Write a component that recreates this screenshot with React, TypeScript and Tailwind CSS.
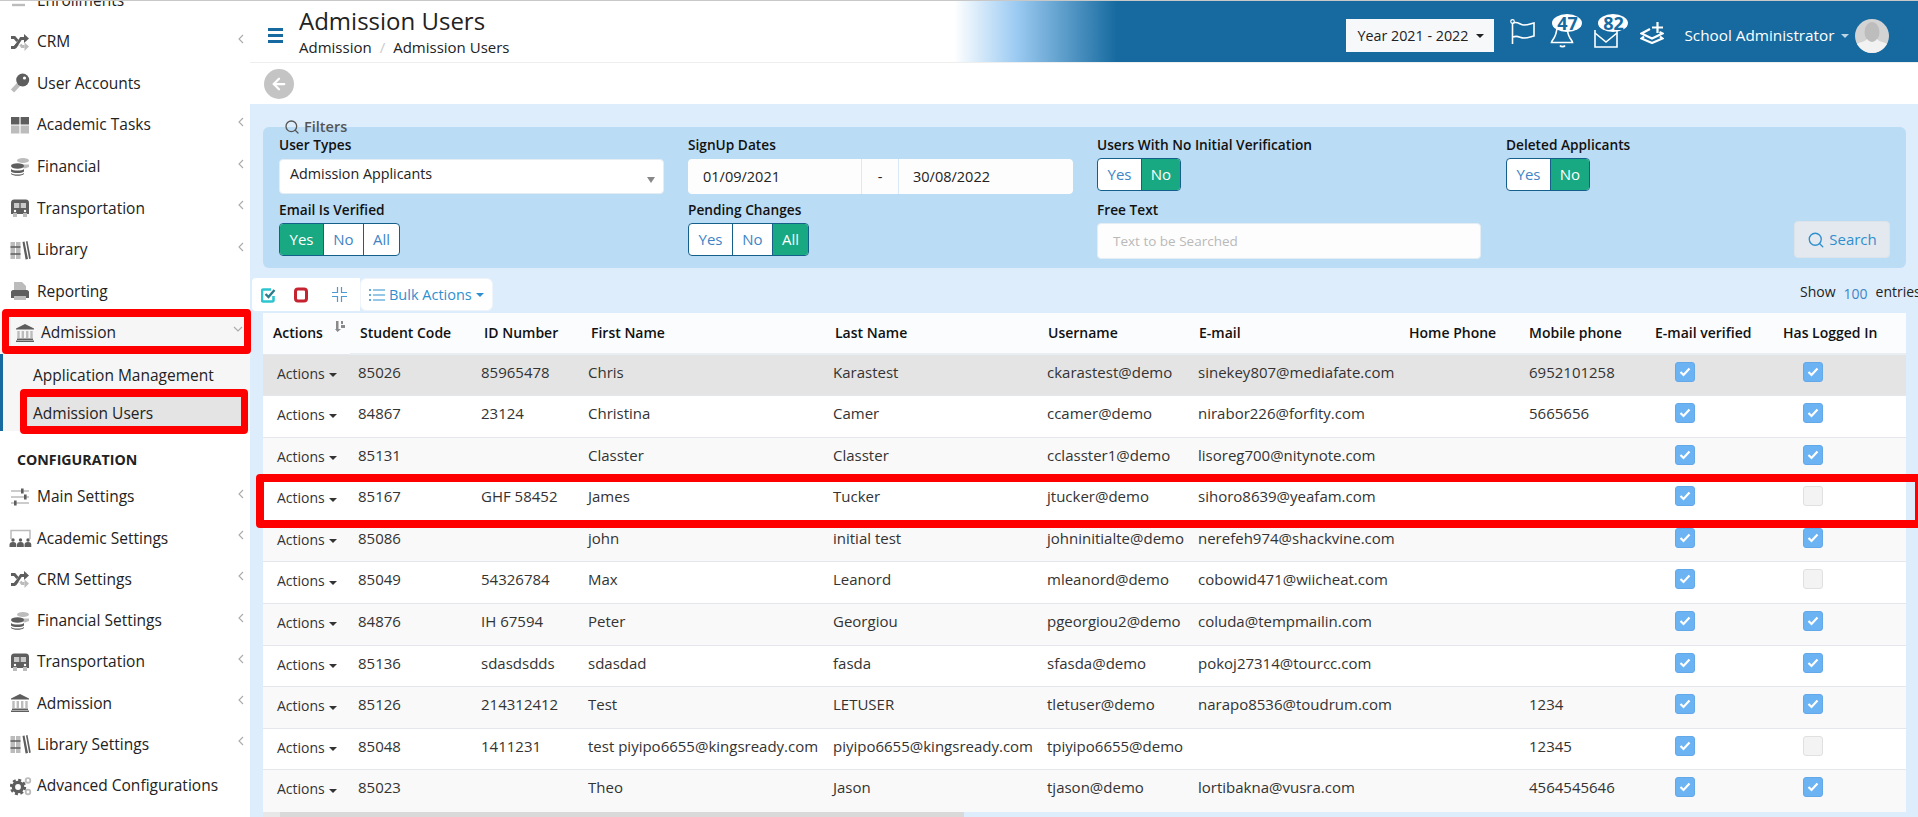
import React from "react";
import { Search, ArrowLeft } from "lucide-react";

const D = "#5e5e5e";
const L = "#bcbcbc";

function Svg({ children, w = 20 }: { children: React.ReactNode; w?: number }) {
  return (
    <svg width={w} height={20} viewBox={`0 0 ${w} 20`} fill="none" className="shrink-0">
      {children}
    </svg>
  );
}

const icons: Record<string, React.ReactNode> = {
  exchange: (
    <Svg>
      <path d="M18 6H5M8 2L3 6l5 4" stroke={L} strokeWidth="2.4" />
      <path d="M2 15h13" stroke={L} strokeWidth="2.4" />
    </Svg>
  ),
  shuffle: (
    <Svg>
      <path d="M1 15.5h3.5L7.5 12" stroke={D} strokeWidth="2.8" />
      <path d="M1 5.5h3.5l3 3.5" stroke={D} strokeWidth="2.8" />
      <path d="M5 15.5 L11 6.5h3" stroke={D} strokeWidth="2.8" />
      <path d="M14 2l5 4.5L14 11z" fill={D} />
      <path d="M10.5 12.5l1.5 2h2.5" stroke={L} strokeWidth="2.8" />
      <path d="M14.5 10.5l4.5 4-4.5 4.5z" fill={L} />
    </Svg>
  ),
  key: (
    <Svg>
      <path d="M9 11L2.5 18" stroke={L} strokeWidth="4.4" />
      <circle cx="12.7" cy="7" r="6.5" fill={D} />
      <circle cx="14.5" cy="5" r="1.6" fill="#fff" />
    </Svg>
  ),
  tasks: (
    <Svg>
      <rect x="1" y="2" width="8.4" height="7.5" fill={D} />
      <rect x="10.6" y="2" width="8.4" height="7.5" fill={D} />
      <rect x="1" y="10.5" width="8.4" height="8" fill={L} />
      <rect x="10.6" y="10.5" width="8.4" height="8" fill={L} />
    </Svg>
  ),
  coins: (
    <Svg>
      <ellipse cx="13" cy="3.5" rx="6" ry="2.5" fill={L} />
      <path d="M8 7.5h11v2.5l-4 1.5L8 9z" fill={L} />
      <ellipse cx="7.5" cy="9" rx="6.5" ry="2.7" fill={D} />
      <path d="M1 12c2 2 11 2 13 0v2.5c-2 2-11 2-13 0z" fill={D} />
      <path d="M1 16c2 2 11 2 13 0v1c-2 2.4-11 2.4-13 0z" fill={D} />
    </Svg>
  ),
  bus: (
    <Svg>
      <path d="M4 1.500h12c1.500 0 3 1 3 3V16H1V4.500c0-2 1.500-3 3-3z" fill={D} />
      <rect x="4" y="5" width="5.300" height="5" fill="#c9c9c9" />
      <rect x="10.700" y="5" width="5.300" height="5" fill="#c9c9c9" />
      <rect x="3" y="15" width="4" height="4" fill={L} />
      <rect x="13" y="15" width="4" height="4" fill={L} />
      <circle cx="5" cy="13" r="1.200" fill="#fff" />
      <circle cx="15" cy="13" r="1.200" fill="#fff" />
    </Svg>
  ),
  library: (
    <Svg w={21}>
      <rect x="0.500" y="2" width="4.500" height="17" fill={L} />
      <rect x="6" y="2" width="4.500" height="17" fill={L} />
      <path d="M0.500 7h10M0.500 14h10" stroke={D} strokeWidth="1.400" />
      <path d="M12.500 2l2-.5 3.500 17.500-2.400.5z" fill={D} />
      <path d="M16 1.500l1.500-.4 3.300 17.400-1.700.4z" fill={D} />
    </Svg>
  ),
  printer: (
    <Svg>
      <path d="M4 1h8l4 4v5H4z" fill={L} />
      <path d="M1 11c0-1 1-2 2-2h14c1 0 2 1 2 2v6H1z" fill={D} />
      <rect x="4" y="15" width="12" height="4" fill={L} />
    </Svg>
  ),
  bank: (
    <Svg>
      <path d="M10 1l9 4.500v1H1v-1z" fill={D} />
      <path d="M3.500 8v7M7.800 8v7M12.200 8v7M16.500 8v7" stroke={L} strokeWidth="2.400" />
      <rect x="2" y="15.500" width="16" height="1.500" fill={D} />
      <rect x="1" y="17.500" width="18" height="1.500" fill={D} />
    </Svg>
  ),
  sliders: (
    <Svg>
      <path d="M1 4h18M1 10h18M1 16h18" stroke={L} strokeWidth="1.600" />
      <rect x="11" y="1.500" width="2.600" height="5" fill={D} />
      <rect x="14" y="7.500" width="2.600" height="5" fill={D} />
      <rect x="4" y="13.500" width="2.600" height="5" fill={D} />
    </Svg>
  ),
  screen: (
    <span className="-ml-[1px] flex">
      <Svg w={23}>
        <path d="M2 11V2.500h19V11" stroke={L} strokeWidth="1.500" />
        <g fill={D}>
          <circle cx="4" cy="12" r="1.700" />
          <circle cx="11.500" cy="12" r="1.700" />
          <circle cx="19" cy="12" r="1.700" />
          <path d="M0.500 19v-2c0-2 1-3 3.500-3s3.300 1 3.300 3v2z" />
          <path d="M8 19v-2c0-2 1-3 3.500-3s3.300 1 3.300 3v2z" />
          <path d="M15.500 19v-2c0-2 1-3 3.500-3s3.300 1 3.300 3v2z" />
        </g>
      </Svg>
    </span>
  ),
  cogs: (
    <Svg w={22}>
      <circle cx="8" cy="11" r="4.600" stroke={D} strokeWidth="3.400" />
      <circle cx="8" cy="11" r="7" stroke={D} strokeWidth="2.400" strokeDasharray="3 2.500" />
      <circle cx="18" cy="4.500" r="2.300" stroke={L} strokeWidth="1.800" />
      <circle cx="18" cy="16" r="2.300" stroke={L} strokeWidth="1.800" />
    </Svg>
  ),
};

function Chevron() {
  return (
    <svg width="6" height="10" viewBox="0 0 6 10" fill="none" className="-mt-[6px] shrink-0">
      <path d="M5 1L1 5l4 4" stroke="#aaa" strokeWidth="1.100" />
    </svg>
  );
}

function NavRow({ icon, label, arrow = true, compact = false }: { icon: string; label: string; arrow?: boolean; compact?: boolean }) {
  return (
    <div className={`flex items-center pl-[10px] pr-[6px] text-[15.500px] text-[#222] ${compact ? "h-[41.25px]" : "h-[41.6px]"}`}>
      <span className="flex w-[27px] shrink-0">{icons[icon]}</span>
      <span className="flex-1 whitespace-nowrap">{label}</span>
      {arrow && <Chevron />}
    </div>
  );
}

function Sidebar() {
  return (
    <aside className="h-full w-[250px] shrink-0 overflow-hidden bg-white">
      <div className="-mt-[21.500px]">
        <NavRow icon="exchange" label="Enrollments" arrow={false} />
        <NavRow icon="shuffle" label="CRM" />
        <NavRow icon="key" label="User Accounts" arrow={false} />
        <NavRow icon="tasks" label="Academic Tasks" />
        <NavRow icon="coins" label="Financial" />
        <NavRow icon="bus" label="Transportation" />
        <NavRow icon="library" label="Library" />
        <NavRow icon="printer" label="Reporting" arrow={false} />
        <div className="flex h-[41.6px] items-center bg-[#f6f6f6] pl-[15px] pr-[7px] text-[15.500px] text-[#222]">
          <span className="flex w-[26px] shrink-0">{icons.bank}</span>
          <span className="flex-1">Admission</span>
          <svg width="10" height="6" viewBox="0 0 10 6" fill="none" className="-mt-[8px]">
            <path d="M1 1l4 4 4-4" stroke="#aaa" strokeWidth="1.100" />
          </svg>
        </div>
        <div className="h-[77px] border-l-[3px] border-[#166a9f] bg-[#f6f6f6] pl-[30px] text-[15.500px] text-[#222]">
          <div className="flex h-[43px] items-center">Application Management</div>
          <div className="-ml-[6px] mr-[8px] flex h-[34px] items-center bg-[#e4e4e4] pl-[6px]">Admission Users</div>
        </div>
        <div className="flex h-[45.500px] items-center pl-[17px] pt-[13px] text-[14.200px] font-bold text-[#222]">CONFIGURATION</div>
        <NavRow compact icon="sliders" label="Main Settings" />
        <NavRow compact icon="screen" label="Academic Settings" />
        <NavRow compact icon="shuffle" label="CRM Settings" />
        <NavRow compact icon="coins" label="Financial Settings" />
        <NavRow compact icon="bus" label="Transportation" />
        <NavRow compact icon="bank" label="Admission" />
        <NavRow compact icon="library" label="Library Settings" />
        <NavRow compact icon="cogs" label="Advanced Configurations" arrow={false} />
      </div>
    </aside>
  );
}

function HeaderIcons() {
  return (
    <div className="flex items-center">
      <svg width="26" height="25" viewBox="0 0 26 25" fill="none" className="ml-[16px]">
        <circle cx="2.500" cy="2.500" r="1.800" stroke="#fff" strokeWidth="1.200" />
        <path d="M2.500 4v21" stroke="#fff" strokeWidth="1.600" />
        <path d="M3 4c5-2 7 2 11 2s6-1 10-2v13c-4 1-6 2-10 2s-6-3-11-1" stroke="#fff" strokeWidth="1.600" />
      </svg>
      <div className="relative ml-[14px] h-[32px] w-[25px]">
        <svg width="25" height="20" viewBox="0 0 25 20" fill="none" className="absolute left-0 top-[12px]">
          <path d="M7 0C6.500 4 6 7 4 10 3 11.500 2 12.500 1.500 14.500h21C22 12.500 21 11.500 20 10 18 7 17.500 4 17 0" stroke="#fff" strokeWidth="1.600" />
          <path d="M10 17.500c1 1.500 4 1.500 5 0" stroke="#fff" strokeWidth="1.800" />
        </svg>
        <span className="absolute -top-[2px] left-[2px] flex h-[18px] w-[30px] items-center justify-center rounded-[50%] bg-white text-[18px] font-bold leading-none text-[#166a9f]">47</span>
      </div>
      <div className="relative ml-[19px] h-[32px] w-[24px]">
        <svg width="24" height="20" viewBox="0 0 24 20" fill="none" className="absolute left-0 top-[12px]">
          <path d="M1 2v17h22V2" stroke="#fff" strokeWidth="1.600" />
          <path d="M1 5l11 9 11-9" stroke="#fff" strokeWidth="1.600" />
        </svg>
        <span className="absolute -top-[2px] left-[4px] flex h-[18px] w-[30px] items-center justify-center rounded-[50%] bg-white text-[18px] font-bold leading-none text-[#166a9f]">82</span>
      </div>
      <svg width="24" height="22" viewBox="0 0 24 22" fill="none" className="ml-[22px] mt-[3px]">
        <path d="M17.500 0v11M12 5.500h11" stroke="#fff" strokeWidth="2.200" />
        <path d="M10 7L1.500 11.500l10.500 5 10.500-5-3-1.500" stroke="#fff" strokeWidth="2.200" />
        <path d="M4 14.500l-2.500 2 10.500 4.500 10.500-4.500-2.500-2" stroke="#fff" strokeWidth="2.200" />
      </svg>
    </div>
  );
}

function Header() {
  return (
    <header className="flex h-[62px] shrink-0 items-center border-b border-[#eee] bg-[linear-gradient(90deg,#fff_704px,#9ccbf2_766px,#166a9f_867px)] pl-[18px]">
      <div className="mt-[8px] flex w-[15px] flex-col gap-[3px]">
        <span className="h-[3px] bg-[#166a9f]" />
        <span className="h-[3px] bg-[#166a9f]" />
        <span className="h-[3px] bg-[#166a9f]" />
      </div>
      <div className="-mt-[2px] ml-[16px] text-[#222]">
        <div className="text-[24px] leading-[32px]">Admission Users</div>
        <div className="flex h-[20px] items-center text-[15px] leading-[20px]">
          Admission<span className="mx-[8px] text-[#ccc]">/</span>Admission Users
        </div>
      </div>
      <div className="ml-auto mt-[8px] flex h-[33px] w-[148px] items-center bg-[#f7f8fa] pl-[11px] text-[14.300px] text-[#222]">
        Year 2021 - 2022
        <span className="ml-[8px] h-0 w-0 border-x-[4px] border-t-[4px] border-x-transparent border-t-[#222]" />
      </div>
      <HeaderIcons />
      <span className="ml-[20px] mt-[8px] whitespace-nowrap text-[15.300px] text-white">School Administrator</span>
      <span className="ml-[6px] mt-[8px] h-0 w-0 border-x-[4px] border-t-[4px] border-x-transparent border-t-[#bcd4e6]" />
      <svg width="34" height="34" viewBox="0 0 34 34" className="ml-[6.500px] mr-[29px] mt-[8px]">
        <defs>
          <clipPath id="av">
            <ellipse cx="17" cy="17" rx="17" ry="17" />
          </clipPath>
        </defs>
        <g clipPath="url(#av)">
          <rect width="34" height="34" fill="#d3d3d3" />
          <ellipse cx="17" cy="13" rx="7.500" ry="10" fill="#bdbdbd" />
          <path d="M0 34V26c4-3 10-3 12-6 3 4 7 4 10 0 2 3 8 3 12 6v8z" fill="#f2f2f2" />
        </g>
      </svg>
    </header>
  );
}

function Toggle({ active, options }: { active: string; options: [string, number][] }) {
  return (
    <div className="flex h-[33px] w-fit overflow-hidden rounded-[4px] border border-[#14608a] bg-white text-[15px]">
      {options.map(([o, w], i) => (
        <div
          key={o}
          style={{ width: w }}
          className={`flex items-center justify-center ${i > 0 ? "border-l border-[#14608a]" : ""} ${o === active ? "bg-[#18a882] text-white" : "text-[#3f85c6]"}`}
        >
          {o}
        </div>
      ))}
    </div>
  );
}

const yn: [string, number][] = [["Yes", 43], ["No", 39]];
const yna: [string, number][] = [["Yes", 43], ["No", 40], ["All", 36]];

function Label({ children, mb = "mb-[4px]" }: { children: React.ReactNode; mb?: string }) {
  return <div className={`h-[20px] whitespace-nowrap text-[13.700px] font-semibold leading-[20px] text-[#111] ${mb}`}>{children}</div>;
}

function Filters() {
  return (
    <section className="relative h-[141px] rounded-[6px] bg-[#bbdcf5] pl-[16px] pt-[8px]">
      <div className="absolute -top-[10px] left-[21px] flex h-[20px] items-center gap-[4px] text-[14.500px] font-semibold text-[#555]">
        <Search size={16} strokeWidth={2} />
        Filters
      </div>
      <div className="grid grid-cols-[409px_409px_409px_1fr] grid-rows-[65px_1fr]">
        <div>
          <Label>User Types</Label>
          <div className="relative flex h-[35px] w-[385px] items-center rounded-[4px] border border-[#e4edf4] bg-white pb-[6px] pl-[10px] text-[14.300px] text-[#222]">
            Admission Applicants
            <span className="absolute right-[8px] top-[17px] h-0 w-0 border-x-[4px] border-t-[6px] border-x-transparent border-t-[#888]" />
          </div>
        </div>
        <div>
          <Label>SignUp Dates</Label>
          <div className="flex h-[35px] w-[385px] overflow-hidden rounded-[4px] bg-[#d8e9f7] text-[14.500px] text-[#222]">
            <div className="flex w-[173px] items-center rounded-l-[4px] bg-[#fdfdfd] pl-[15px]">01/09/2021</div>
            <div className="mx-[1px] flex w-[36px] items-center justify-center bg-[#fdfdfd]">-</div>
            <div className="flex flex-1 items-center rounded-r-[4px] bg-[#fdfdfd] pl-[14px]">30/08/2022</div>
          </div>
        </div>
        <div>
          <Label mb="mb-[3px]">Users With No Initial Verification</Label>
          <Toggle active="No" options={yn} />
        </div>
        <div>
          <Label mb="mb-[3px]">Deleted Applicants</Label>
          <Toggle active="No" options={yn} />
        </div>
        <div>
          <Label mb="mb-[3px]">Email Is Verified</Label>
          <Toggle active="Yes" options={yna} />
        </div>
        <div>
          <Label mb="mb-[3px]">Pending Changes</Label>
          <Toggle active="All" options={yna} />
        </div>
        <div>
          <Label mb="mb-[3px]">Free Text</Label>
          <div className="flex h-[36px] w-[384px] items-center rounded-[4px] border border-[#e4edf4] bg-[#fdfdfd] pl-[15px] text-[13.500px] text-[#b9b9b9]">Text to be Searched</div>
        </div>
        <div className="flex items-end justify-end pb-[1px] pr-[16px]">
          <div className="flex h-[37px] w-[96px] items-center justify-center gap-[4px] rounded-[4px] border border-[#dde3ea] bg-[#e4e9ef] text-[15px] text-[#2f8fce]">
            <Search size={18} strokeWidth={1.800} />
            Search
          </div>
        </div>
      </div>
    </section>
  );
}

function Toolbar() {
  return (
    <div className="mt-[10px] flex h-[33px] items-stretch">
      <div className="-ml-[11px] flex w-[108px] items-center rounded-l-[4px] bg-white">
        <svg width="15" height="16" viewBox="0 0 15 16" fill="none" className="ml-[9px]">
          <path d="M12.500 9v4c0 1-.5 1.500-1.500 1.500H2.500C1.500 14.500 1 14 1 13V4c0-1 .5-1.500 1.500-1.500H10" stroke="#2cc5d0" strokeWidth="2.600" />
          <path d="M4.500 7l3 3 6-7" stroke="#2b7c8c" strokeWidth="2.400" />
        </svg>
        <svg width="14" height="16" viewBox="0 0 14 16" fill="none" className="ml-[18px]">
          <rect x="1.500" y="2" width="11" height="12" rx="2.500" stroke="#c5232f" strokeWidth="3" />
        </svg>
        <svg width="15" height="15" viewBox="0 0 15 15" fill="none" className="ml-[24px]">
          <path d="M5.500 0v5.500H0M9.500 0v5.500H15M5.500 15V9.500H0M9.500 15V9.500H15" stroke="#4a9ad4" strokeWidth="1.200" />
        </svg>
      </div>
      <div className="flex w-[133px] items-center rounded-[6px] border border-[#eef4fa] bg-white pl-[8px] text-[14.500px] text-[#2f8fce]">
        <svg width="16" height="14" viewBox="0 0 16 14" fill="none">
          <path d="M4 2h12M4 7h12M4 12h12" stroke="#2f8fce" strokeWidth="1.100" />
          <path d="M0 2h2M0 7h2M0 12h2" stroke="#2f8fce" strokeWidth="1.400" />
        </svg>
        <span className="ml-[4px] whitespace-nowrap">Bulk Actions</span>
        <span className="ml-[4px] h-0 w-0 border-x-[4px] border-t-[4px] border-x-transparent border-t-[#2f8fce]" />
      </div>
      <div className="-mr-[34px] ml-auto flex w-[140px] shrink-0 items-center whitespace-nowrap pb-[7px] text-[14px] text-[#222]">
        Show<span className="mx-[8px] mt-[5px] text-[#3f85c6]">100</span>entries
      </div>
    </div>
  );
}

type Row = { a: string; b: string; c: string; d: string; e: string; f: string; g: string; v: boolean };
const rows: Row[] = [
  { a: "85026", b: "85965478", c: "Chris", d: "Karastest", e: "ckarastest@demo", f: "sinekey807@mediafate.com", g: "6952101258", v: true },
  { a: "84867", b: "23124", c: "Christina", d: "Camer", e: "ccamer@demo", f: "nirabor226@forfity.com", g: "5665656", v: true },
  { a: "85131", b: "", c: "Classter", d: "Classter", e: "cclasster1@demo", f: "lisoreg700@nitynote.com", g: "", v: true },
  { a: "85167", b: "GHF 58452", c: "James", d: "Tucker", e: "jtucker@demo", f: "sihoro8639@yeafam.com", g: "", v: false },
  { a: "85086", b: "", c: "john", d: "initial test", e: "johninitialte@demo", f: "nerefeh974@shackvine.com", g: "", v: true },
  { a: "85049", b: "54326784", c: "Max", d: "Leanord", e: "mleanord@demo", f: "cobowid471@wiicheat.com", g: "", v: false },
  { a: "84876", b: "IH 67594", c: "Peter", d: "Georgiou", e: "pgeorgiou2@demo", f: "coluda@tempmailin.com", g: "", v: true },
  { a: "85136", b: "sdasdsdds", c: "sdasdad", d: "fasda", e: "sfasda@demo", f: "pokoj27314@tourcc.com", g: "", v: true },
  { a: "85126", b: "214312412", c: "Test", d: "LETUSER", e: "tletuser@demo", f: "narapo8536@toudrum.com", g: "1234", v: true },
  { a: "85048", b: "1411231", c: "test piyipo6655@kingsready.com", d: "piyipo6655@kingsready.com", e: "tpiyipo6655@demo", f: "", g: "12345", v: false },
  { a: "85023", b: "", c: "Theo", d: "Jason", e: "tjason@demo", f: "lortibakna@vusra.com", g: "4564545646", v: true },
];

function Check({ on }: { on: boolean }) {
  return (
    <div className={`ml-[20px] flex h-[20px] w-[20px] items-center justify-center rounded-[3px] border ${on ? "border-[#63a9ea] bg-[#6cb3f3]" : "border-[#e0e0e0] bg-[#f3f3f3]"}`}>
      {on && (
        <svg width="12" height="10" viewBox="0 0 12 10" fill="none">
          <path d="M1.500 5l3 3 6-6.500" stroke="#fff" strokeWidth="2.200" />
        </svg>
      )}
    </div>
  );
}

const heads: [string, string][] = [
  ["Student Code", "pl-[10px]"],
  ["ID Number", "pl-[10px]"],
  ["First Name", "pl-[10px]"],
  ["Last Name", "pl-[9px]"],
  ["Username", "pl-[8px]"],
  ["E-mail", "pl-[8px]"],
  ["Home Phone", "pl-[7px]"],
  ["Mobile phone", "pl-[7px]"],
  ["E-mail verified", "pl-[7px]"],
  ["Has Logged In", "pl-[7px]"],
];

function DataTable() {
  const td = "h-[41.6px] pl-[7px] pt-[7px] align-top leading-[20px] whitespace-nowrap overflow-hidden";
  return (
    <table className="mt-[2px] w-[1643px] table-fixed border-collapse text-[15px] text-[#333]">
      <colgroup>
        <col className="w-[87px]" />
        <col className="w-[124px]" />
        <col className="w-[107px]" />
        <col className="w-[245px]" />
        <col className="w-[214px]" />
        <col className="w-[151px]" />
        <col className="w-[211px]" />
        <col className="w-[120px]" />
        <col className="w-[126px]" />
        <col className="w-[128px]" />
        <col className="w-[130px]" />
      </colgroup>
      <thead>
        <tr className="h-[41px] bg-[#fafcfe] text-left text-[14px] text-[#111]">
          <th className="pb-[2px] pl-[10px] font-semibold">
            <div className="flex items-start">
              <span>Actions</span>
              <svg width="11" height="11" viewBox="0 0 11 11" className="ml-[12px] -mt-[1px]" fill="#8a8a8a">
                <path d="M1 0h2.500v8H6L2.500 11 0 8h1zM6 0h2v3H6zM6 4h4v3H6z" />
              </svg>
            </div>
          </th>
          {heads.map(([h, p]) => (
            <th key={h} className={`border-b-2 border-[#e9eef3] pb-[2px] font-semibold whitespace-nowrap ${p}`}>
              {h}
            </th>
          ))}
        </tr>
      </thead>
      <tbody>
        {rows.map((r, i) => (
          <tr key={r.a} className={`border-t border-[#e4e8ec] ${i === 0 ? "bg-[#e4e4e4]" : i % 2 === 0 ? "bg-[#f9f9f9]" : "bg-white"}`}>
            <td className="h-[41.6px] pl-[14px] pt-[9px] align-top text-[14px] leading-[20px] whitespace-nowrap">
              Actions
              <span className="ml-[4px] inline-block h-0 w-0 border-x-[4px] border-t-[4px] border-x-transparent border-t-[#333] align-middle" />
            </td>
            <td className="h-[41.6px] pl-[8px] pt-[7px] align-top leading-[20px] whitespace-nowrap overflow-hidden">{r.a}</td>
            <td className={td}>{r.b}</td>
            <td className={td}>{r.c}</td>
            <td className={td}>{r.d}</td>
            <td className={td}>{r.e}</td>
            <td className={td}>{r.f}</td>
            <td className={td} />
            <td className={td}>{r.g}</td>
            <td className={td}>
              <Check on />
            </td>
            <td className={td}>
              <Check on={r.v} />
            </td>
          </tr>
        ))}
      </tbody>
    </table>
  );
}

export default function App() {
  return (
    <div className="relative flex h-screen w-full flex-col overflow-hidden bg-[#deedfb] [font-family:'Open_Sans',sans-serif]">
      <div className="h-px shrink-0 bg-[#c8c8c8]" />
      <div className="flex min-h-0 flex-1">
        <Sidebar />
        <div className="min-w-0 flex-1">
          <Header />
          <div className="flex h-[41px] items-center bg-white pl-[14px]">
            <div className="flex h-[30px] w-[30px] items-center justify-center rounded-full bg-[#c4c4c4] text-white">
              <ArrowLeft size={18} strokeWidth={3} />
            </div>
          </div>
          <main className="ml-[13px] mr-[12px] pt-[23px]">
            <Filters />
            <Toolbar />
            <DataTable />
            <div className="flex h-[7px] w-[701px]">
              <div className="w-[17px] bg-[#e8e8e8]" />
              <div className="flex-1 bg-[#d9d9d9]" />
            </div>
          </main>
        </div>
      </div>
      <div className="absolute left-[2px] top-[309px] h-[45px] w-[249px] rounded-[4px] border-x-[7px] border-y-[8px] border-[#ff0000]" />
      <div className="absolute left-[20px] top-[389px] h-[45px] w-[228px] rounded-[4px] border-x-[7px] border-y-[8px] border-[#ff0000]" />
      <div className="absolute left-[256px] top-[474px] h-[54px] w-[1662px] rounded-l-[4px] border-y-[8px] border-l-[8px] border-r-[3px] border-[#ff0000]" />
    </div>
  );
}
